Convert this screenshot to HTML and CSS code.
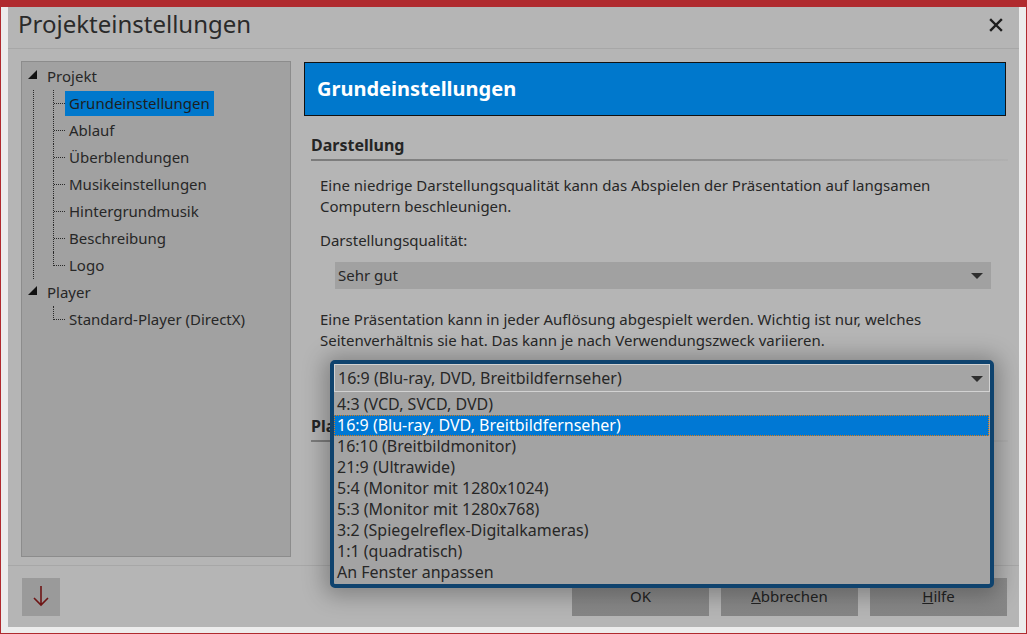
FILE: index.html
```html
<!DOCTYPE html>
<html lang="de">
<head>
  <meta charset="UTF-8">
  <meta name="viewport" content="width=device-width, initial-scale=1.0">
  <title>Projekteinstellungen</title>
  <link rel="stylesheet" href="styles.css">
</head>
<body>
  <div class="frame">
    <div class="dialog">
      <div class="titlebar">
        <h1>Projekteinstellungen</h1>
        <svg class="close" width="14" height="14" viewBox="0 0 14 14">
          <path d="M2 2 L12 12 M12 2 L2 12" stroke="#1c1c1c" stroke-width="2.4" stroke-linecap="square"/>
        </svg>
      </div>

      <div class="main">
        <ul class="tree">
          <li class="node">
            <div class="row"><span class="exp"></span><span class="name">Projekt</span></div>
            <ul class="kids">
              <li><span class="conn"></span><span class="name selected">Grundeinstellungen</span></li>
              <li><span class="conn"></span><span class="name">Ablauf</span></li>
              <li><span class="conn"></span><span class="name">Überblendungen</span></li>
              <li><span class="conn"></span><span class="name">Musikeinstellungen</span></li>
              <li><span class="conn"></span><span class="name">Hintergrundmusik</span></li>
              <li><span class="conn"></span><span class="name">Beschreibung</span></li>
              <li><span class="conn"></span><span class="name">Logo</span></li>
            </ul>
          </li>
          <li class="node">
            <div class="row"><span class="exp"></span><span class="name">Player</span></div>
            <ul class="kids">
              <li><span class="conn"></span><span class="name">Standard-Player (DirectX)</span></li>
            </ul>
          </li>
        </ul>

        <div class="page">
          <div class="page-head">Grundeinstellungen</div>

          <div class="section">
            <h2>Darstellung</h2>
            <p>Eine niedrige Darstellungsqualität kann das Abspielen der Präsentation auf langsamen Computern beschleunigen.</p>
            <p class="field-label">Darstellungsqualität:</p>
            <div class="select">Sehr gut<span class="arrow"></span></div>
            <p class="gap">Eine Präsentation kann in jeder Auflösung abgespielt werden. Wichtig ist nur, welches Seitenverhältnis sie hat. Das kann je nach Verwendungszweck variieren.</p>
            <div class="select covered"></div>
          </div>

          <div class="section">
            <h2>Player</h2>
          </div>
        </div>
      </div>

      <div class="buttons">
        <button class="down">
          <svg width="20" height="22" viewBox="0 0 20 22">
            <path d="M10 1 V20 M3 13 L10 20 L17 13" fill="none" stroke="#6e1414" stroke-width="1.6"/>
          </svg>
        </button>
        <div class="actions">
          <button class="btn">OK</button>
          <button class="btn"><u>A</u>bbrechen</button>
          <button class="btn"><u>H</u>ilfe</button>
        </div>
      </div>
    </div>
  </div>

  <div class="dropdown">
    <div class="dd-current">16:9 (Blu-ray, DVD, Breitbildfernseher)<span class="arrow"></span></div>
    <ul class="dd-list">
      <li>4:3 (VCD, SVCD, DVD)</li>
      <li class="active">16:9 (Blu-ray, DVD, Breitbildfernseher)</li>
      <li>16:10 (Breitbildmonitor)</li>
      <li>21:9 (Ultrawide)</li>
      <li>5:4 (Monitor mit 1280x1024)</li>
      <li>5:3 (Monitor mit 1280x768)</li>
      <li>3:2 (Spiegelreflex-Digitalkameras)</li>
      <li>1:1 (quadratisch)</li>
      <li>An Fenster anpassen</li>
    </ul>
  </div>
</body>
</html>
```

FILE: styles.css
```css
body {
  margin: 0;
  width: 1027px;
  height: 634px;
  overflow: hidden;
  font-family: 'Noto Sans', 'Liberation Sans', sans-serif;
  font-size: 15px;
  color: #272727;
  background: #ececec;
}

.frame {
  box-sizing: border-box;
  height: 634px;
  border: 1px solid #b02a2e;
  border-top-width: 7px;
  background: #ececec;
  padding: 0 7px 6px 7px;
}

.dialog {
  height: 100%;
  background: #b5b5b5;
  display: flex;
  flex-direction: column;
}

.titlebar {
  box-sizing: border-box;
  height: 42px;
  display: flex;
  align-items: center;
  justify-content: space-between;
  padding: 0 16px 7px 10px;
  border-bottom: 1px solid #a7a7a7;
}

.titlebar h1 {
  margin: 0;
  font-size: 24px;
  font-weight: normal;
  color: #2a2a2a;
  line-height: 30px;
}

.close {
  position: relative;
  top: 1px;
}

.main {
  flex: 1;
  display: flex;
  gap: 13px;
  padding: 12px 13px 8px 13px;
  border-bottom: 1px solid #a7a7a7;
  min-height: 0;
}

/* tree */
.tree {
  box-sizing: border-box;
  width: 270px;
  flex: none;
  margin: 0;
  padding: 1px 0 0 6px;
  list-style: none;
  background: #a1a1a1;
  border: 1px solid #8c8c8c;
}

.tree ul {
  list-style: none;
  margin: 0;
  padding: 0;
}

.row {
  height: 27px;
  display: flex;
  align-items: center;
}

.exp {
  width: 0;
  height: 0;
  border-left: 9px solid transparent;
  border-bottom: 9px solid #111;
  margin-right: 6px;
  position: relative;
  top: -2px;
}

.name {
  padding: 0 4px;
  line-height: 25px;
  white-space: nowrap;
}

.name.selected {
  background: #0078cc;
  color: #1e1e1e;
}

.kids {
  margin-left: 5px !important;
  padding-left: 19px !important;
  border-left: 1px dotted transparent;
}

.node:first-child > .kids {
  border-left-color: #2a2a2a;
}

.kids li {
  display: flex;
  height: 27px;
  align-items: center;
}

.conn {
  align-self: stretch;
  width: 11px;
  border-left: 1px dotted #2a2a2a;
  position: relative;
}

.conn::after {
  content: '';
  position: absolute;
  left: 0;
  top: 13px;
  width: 11px;
  border-top: 1px dotted #2a2a2a;
}

.kids li:last-child .conn {
  align-self: flex-start;
  height: 14px;
}

/* page */
.page {
  flex: 1;
  padding-top: 1px;
}

.page-head {
  height: 52px;
  line-height: 52px;
  background: #0078cc;
  border: 1px solid #111;
  color: #fff;
  font-size: 20px;
  font-weight: bold;
  padding-left: 12px;
}

.section h2 {
  margin: 18px 0 0 0;
  padding: 0 0 4px 7px;
  font-size: 16px;
  line-height: 22px;
  color: #252525;
}

.section h2::after {
  content: '';
  display: block;
  height: 2px;
  margin: 3px -2px 0 0;
  background: linear-gradient(to right, #7c7c7c, #8e8e8e 60%, #b0b0b0);
}

.section p {
  margin: 10px 0 0 16px;
  line-height: 21px;
}

.section p.field-label {
  margin-top: 13px;
}

.section p.gap {
  margin-top: 20px;
}

.select {
  position: relative;
  margin: 11px 15px 0 31px;
  height: 27px;
  line-height: 27px;
  padding-left: 3px;
  background: #a1a1a1;
}

.select.covered {
  margin-top: 13px;
}

.arrow {
  position: absolute;
  right: 8px;
  top: 11px;
  width: 0;
  height: 0;
  border-left: 6px solid transparent;
  border-right: 6px solid transparent;
  border-top: 6px solid #2e2e2e;
}

.section + .section h2 {
  margin-top: 24px;
}

/* bottom bar */
.buttons {
  display: flex;
  justify-content: space-between;
  padding: 12px 12px 11px 14px;
}

.buttons button {
  font-family: inherit;
  font-size: 15px;
  line-height: 20px;
  color: #232323;
  border: none;
  height: 38px;
  padding-bottom: 3px;
}

.down {
  width: 38px;
  background: #9a9a9a;
  padding: 0;
  display: flex;
  align-items: center;
  justify-content: center;
}

.actions {
  display: flex;
  gap: 12px;
}

.btn {
  width: 137px;
  background: linear-gradient(#8d8d8d, #858585);
}

/* open dropdown list over the page */
.dropdown {
  position: absolute;
  left: 330px;
  top: 360px;
  width: 656px;
  height: 220px;
  border: 4px solid #0f436e;
  border-radius: 5px;
  background: #a3a3a3;
  box-shadow: 0 2px 22px 6px rgba(0, 0, 0, 0.28);
  font-size: 16px;
}

.dd-current {
  position: relative;
  height: 26px;
  line-height: 26px;
  padding-left: 3px;
  border: 1px solid #d2d2d2;
  background: #a5a5a5;
}

.dd-current .arrow {
  right: 6px;
}

.dd-list {
  list-style: none;
  margin: 2px 0 0 0;
  padding: 0;
}

.dd-list li {
  height: 21px;
  line-height: 21px;
  padding-left: 3px;
  margin-right: 1px;
}

.dd-list li.active {
  background: #0078d4;
  color: #fff;
  outline: 1px dotted #e07a10;
  outline-offset: -1px;
}
```
